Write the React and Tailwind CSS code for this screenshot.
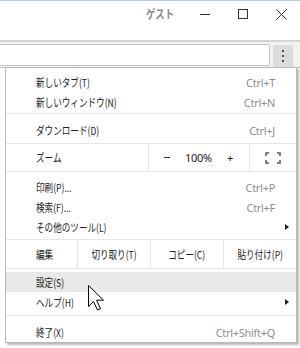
import React from "react";

const jp = "font-['Noto_Sans_CJK_JP','Noto_Sans',sans-serif]";
const lat = "font-['Noto_Sans',sans-serif] tracking-[-0.3px]";
const sq = "inline-block scale-x-[0.78] whitespace-nowrap";

function Item({ label, shortcut, arrow, active }) {
  return (
    <div className={`flex items-center h-5 pl-[30px] ${arrow ? "pr-[7px]" : "pr-[21px]"} ${active ? "bg-[#e8e8e8]" : ""}`}>
      <span className={`${sq} origin-left text-[11px] leading-none text-[#222]`}>{label}</span>
      {shortcut && <span className={`ml-auto text-[11px] leading-none text-[#8e8e8e] ${lat}`}>{shortcut}</span>}
      {arrow && (
        <span className="ml-auto w-0 h-0 border-y-[3.5px] border-y-transparent border-l-[4px] border-l-[#222]" />
      )}
    </div>
  );
}

function Sep({ top, bottom }) {
  return <div className={`${top} ${bottom} h-px bg-[#e6e6e6]`} />;
}

function Cell({ children }) {
  return (
    <div className="w-[73px] border-l border-[#e6e6e6] flex items-center justify-center">
      <span className={`${sq} origin-center`}>{children}</span>
    </div>
  );
}

export default function App() {
  return (
    <div className={`relative w-[300px] h-[348px] overflow-hidden bg-white ${jp}`}>
      <div className="h-px bg-[#b7cbe2]" />
      {/* title bar */}
      <div className="h-[39px] flex items-start">
        <div className="flex-1" />
        <span className={`${sq} origin-right mt-[6px] mr-[12px] text-[12px] leading-[14px] font-bold text-[#8a8a8a]`}>ゲスト</span>
        <div className="w-[38px] h-[26px] flex items-center justify-center">
          <div className="w-[10px] h-px bg-[#333]" />
        </div>
        <div className="w-[38px] h-[26px] flex items-center justify-center">
          <div className="w-[10px] h-[10px] border border-[#333]" />
        </div>
        <div className="w-[38px] h-[26px] flex items-center justify-center">
          <svg width="11" height="11" viewBox="0 0 11 11">
            <path d="M0.5 0.5 L10.5 10.5 M10.5 0.5 L0.5 10.5" stroke="#333" strokeWidth="1" />
          </svg>
        </div>
      </div>
      <div className="h-[2px] bg-[#d5d5d5]" />
      {/* toolbar */}
      <div className="h-[25px] bg-[#f2f2f2] flex items-start">
        <div className="mt-[2px] ml-[-2px] w-[272px] h-[22px] bg-white border border-[#c4c4c4] rounded-[2px]" />
        <div className="mt-[3px] ml-[3px] w-[20px] h-[22px] bg-[#dcdcdc] rounded-[2px] flex flex-col items-center justify-center gap-[3px]">
          <div className="w-[2px] h-[2px] bg-[#555]" />
          <div className="w-[2px] h-[2px] bg-[#555]" />
          <div className="w-[2px] h-[2px] bg-[#555]" />
        </div>
      </div>
      <div className="h-px bg-[#c6c6c6]" />

      {/* menu */}
      <div className="absolute left-[5px] top-[67px] w-[292px] bg-white border border-[#b8b8b8] shadow-[2px_2px_2px_rgba(0,0,0,0.28)]">
        <div className="pt-[4px]">
          <Item label="新しいタブ(T)" shortcut="Ctrl+T" />
          <Item label="新しいウィンドウ(N)" shortcut="Ctrl+N" />
          <Sep top="mt-px" bottom="mb-[6px]" />
          <Item label="ダウンロード(D)" shortcut="Ctrl+J" />
          <div className="mt-[3px] flex h-[29px] border-y border-[#e6e6e6]">
            <div className="w-[142px] flex items-center pl-[30px] text-[11px] leading-none text-[#222]">
              <span className={`${sq} origin-left`}>ズーム</span>
            </div>
            <div className={`w-[101px] border-l border-[#e6e6e6] flex items-center justify-between pl-[15px] pr-[16px] text-[11px] leading-none text-[#222] ${lat}`}>
              <div className="w-[6px] h-[1.5px] bg-[#333]" />
              <span>100%</span>
              <span>+</span>
            </div>
            <div className="flex-1 border-l border-[#e6e6e6] flex items-center justify-center">
              <svg width="16" height="12" viewBox="0 0 16 12">
                <path d="M1 4 V1 H4 M12 1 H15 V4 M15 8 V11 H12 M4 11 H1 V8" stroke="#555" strokeWidth="1.5" fill="none" />
              </svg>
            </div>
          </div>
          <div className="h-[5px]" />
          <Item label="印刷(P)..." shortcut="Ctrl+P" />
          <Item label="検索(F)..." shortcut="Ctrl+F" />
          <Item label="その他のツール(L)" arrow />
          <div className="mt-[2px] flex h-[30px] border-y border-[#e6e6e6] text-[11px] leading-none text-[#222]">
            <div className="w-[71px] flex items-center pl-[30px]">
              <span className={`${sq} origin-left`}>編集</span>
            </div>
            <Cell>切り取り(T)</Cell>
            <Cell>コピー(C)</Cell>
            <Cell>貼り付け(P)</Cell>
          </div>
          <div className="h-[3px]" />
          <Item label="設定(S)" active />
          <Item label="ヘルプ(H)" arrow />
          <Sep top="mt-[3px]" bottom="mb-[6px]" />
          <Item label="終了(X)" shortcut="Ctrl+Shift+Q" />
        </div>
      </div>

      {/* mouse cursor */}
      <svg className="absolute left-[88px] top-[285px]" width="18" height="26" viewBox="0 0 18 26">
        <path d="M0.5 0.5 L0.5 21.5 L5.5 16.5 L9.5 25 L12.5 23.6 L8.6 15.2 L15.5 15.2 Z" fill="#fff" stroke="#000" strokeWidth="1" strokeLinejoin="miter" />
      </svg>
    </div>
  );
}
